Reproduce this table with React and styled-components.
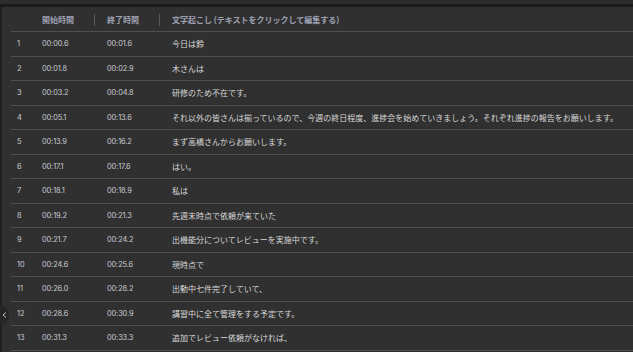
import React from 'react';
import styled, { createGlobalStyle } from 'styled-components';

const GlobalStyle = createGlobalStyle`
  html, body {
    margin: 0;
    padding: 0;
    background: #303030;
    overflow: hidden;
  }
  #root {
    width: 633px;
    height: 352px;
  }
`;

const Page = styled.div`
  width: 633px;
  height: 352px;
  display: flex;
  flex-direction: column;
  position: relative;
  overflow: hidden;
  background: #303030;
`;

const TopStrip = styled.div`
  height: 4px;
  background: #2d2d2d;
  flex-shrink: 0;
`;

const TopRule = styled.div`
  height: 3px;
  background: #1b1b1b;
  flex-shrink: 0;
`;

const Body = styled.div`
  flex: 1;
  display: flex;
  min-height: 0;
`;

const Rail = styled.div`
  width: 2px;
  background: #1f1f1f;
  flex-shrink: 0;
`;

const Panel = styled.div`
  flex: 1;
  padding-left: 9px;
  background: #303030;
  min-width: 0;
`;

const Table = styled.div`
  display: grid;
  grid-template-columns: 31px 65px 65px 1fr;
`;

const Row = styled.div`
  display: contents;
`;

const Cell = styled.div`
  height: ${(props) => (props.head ? '24px' : '23.5px')};
  display: flex;
  align-items: center;
  border-bottom: 1px solid #4f4f4f;
  padding-left: ${(props) => (props.num ? '6px' : '0')};
  position: relative;
  white-space: nowrap;
  font-family: ${(props) =>
    props.jp
      ? '"Noto Sans CJK JP", "Noto Sans", sans-serif'
      : 'Inter, "Noto Sans", sans-serif'};
  font-size: ${(props) => (props.jp ? '8px' : '7.4px')};
  font-weight: ${(props) => (props.head ? 700 : 400)};
  color: ${(props) => (props.head ? '#9ea1b4' : props.jp ? '#d9d9d9' : '#c8cbd4')};
  letter-spacing: ${(props) => (props.jp ? '0' : '-0.1px')};
`;

const HeadDivider = styled.span`
  position: absolute;
  right: 12px;
  top: 7px;
  height: 12px;
  width: 1px;
  background: #5a5a5a;
`;

const EdgeButton = styled.div`
  position: absolute;
  left: -9px;
  top: 305px;
  width: 18px;
  height: 20px;
  border-radius: 50%;
  background: #262626;
  display: flex;
  align-items: center;
  justify-content: flex-end;
  padding-right: 2px;
  box-sizing: border-box;
`;

const rows = [
  ['00:00.6', '00:01.6', '今日は鈴'],
  ['00:01.8', '00:02.9', '木さんは'],
  ['00:03.2', '00:04.8', '研修のため不在です。'],
  ['00:05.1', '00:13.6', 'それ以外の皆さんは揃っているので、今週の終日程度、進捗会を始めていきましょう。それぞれ進捗の報告をお願いします。'],
  ['00:13.9', '00:16.2', 'まず高橋さんからお願いします。'],
  ['00:17.1', '00:17.6', 'はい。'],
  ['00:18.1', '00:18.9', '私は'],
  ['00:19.2', '00:21.3', '先週末時点で依頼が来ていた'],
  ['00:21.7', '00:24.2', '出機能分についてレビューを実施中です。'],
  ['00:24.6', '00:25.6', '現時点で'],
  ['00:26.0', '00:28.2', '出動中七件完了していて、'],
  ['00:28.6', '00:30.9', '講習中に全て管理をする予定です。'],
  ['00:31.3', '00:33.3', '追加でレビュー依頼がなければ、'],
];

export default function App() {
  return (
    <>
      <GlobalStyle />
      <Page>
        <TopStrip />
        <TopRule />
        <Body>
          <Rail />
          <Panel>
            <Table>
              <Row>
                <Cell head num />
                <Cell head jp>
                  開始時間
                  <HeadDivider />
                </Cell>
                <Cell head jp>
                  終了時間
                  <HeadDivider />
                </Cell>
                <Cell head jp>文字起こし (テキストをクリックして編集する)</Cell>
              </Row>
              {rows.map((r, i) => (
                <Row key={i}>
                  <Cell num>{i + 1}</Cell>
                  <Cell>{r[0]}</Cell>
                  <Cell>{r[1]}</Cell>
                  <Cell jp>{r[2]}</Cell>
                </Row>
              ))}
            </Table>
          </Panel>
        </Body>
        <EdgeButton>
          <svg width="5" height="6" viewBox="0 0 5 6">
            <path d="M4 0.5 L1 3 L4 5.5" stroke="#bdbdbd" strokeWidth="1" fill="none" />
          </svg>
        </EdgeButton>
      </Page>
    </>
  );
}
